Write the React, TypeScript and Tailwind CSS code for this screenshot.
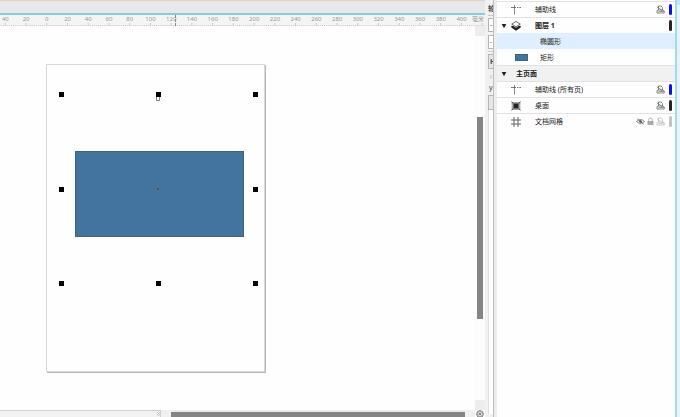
import type { ReactNode } from 'react';

const rulerLabels = [40, 20, 0, 20, 40, 60, 80, 100, 120, 140, 160, 180, 200, 220, 240, 260, 280, 300, 320, 340, 360, 380, 400];

const GuidesIcon = () => (
  <svg viewBox="0 0 10 10" className="w-[10px] h-[10px]" fill="none" stroke="#666">
    <path d="M3.5 0V9.5" strokeWidth="0.8" />
    <path d="M0 2.5H5M6 2.5H7.4M8.4 2.5H10" strokeWidth="0.9" />
  </svg>
);

const LayersIcon = () => (
  <svg viewBox="0 0 10 10" className="w-[10px] h-[10px]">
    <path d="M0.3 5L2 4.8L5 6.8L8 4.8L9.7 5V6.4L5 9.8L0.3 6.4Z" fill="#222" />
    <path d="M5 0.5L9.3 3.1L5 5.7L0.7 3.1Z" fill="#fff" stroke="#444" strokeWidth="0.8" />
  </svg>
);

const DesktopIcon = () => (
  <svg viewBox="0 0 10 10" className="w-[10px] h-[10px]">
    <rect x="1" y="1.2" width="8" height="7.6" fill="#bbb" stroke="#777" strokeWidth="0.5" />
    <rect x="2.5" y="2.5" width="5" height="5" fill="#222" />
    <path d="M0.5 0.8L2.5 2.7M9.5 0.8L7.5 2.7M0.5 9.2L2.5 7.3M9.5 9.2L7.5 7.3" stroke="#333" strokeWidth="0.8" />
  </svg>
);

const GridIcon = () => (
  <svg viewBox="0 0 10 10" className="w-[10px] h-[10px]" stroke="#555" strokeWidth="0.9">
    <path d="M3 0V10M7 0V10M0 3H10M0 7H10" />
  </svg>
);

const PrinterIcon = ({ color }: { color: string }) => (
  <svg viewBox="0 0 9 9" className="w-[9px] h-[9px]" fill="none" stroke={color} strokeWidth="0.8">
    <path d="M2.5 5V1H5L6.5 2.5V5" />
    <path d="M1 8V5.8L2.5 5H6.5L8.2 5.8V8Z" />
    <path d="M2.5 6.5H6.8M1 1.8L7.8 6.6" strokeWidth="0.7" />
  </svg>
);

const EyeOffIcon = () => (
  <svg viewBox="0 0 9 9" className="w-[9px] h-[9px]" fill="none" stroke="#555" strokeWidth="0.7">
    <path d="M0.5 4.5Q4.5 0.6 8.5 4.5Q4.5 8.4 0.5 4.5Z" />
    <circle cx="4.5" cy="4.5" r="1.1" fill="#555" />
    <path d="M1.2 1.7L7.8 7.4" />
  </svg>
);

const LockIcon = () => (
  <svg viewBox="0 0 9 9" className="w-[9px] h-[9px]">
    <path d="M2.7 4.2V2.8Q2.7 1 4.5 1Q6.3 1 6.3 2.8V4.2" fill="none" stroke="#aaa" strokeWidth="0.9" />
    <rect x="1.5" y="4" width="6" height="4" fill="#aaa" />
  </svg>
);

const Arrow = () => (
  <svg viewBox="0 0 6 6" className="w-[6px] h-[6px]">
    <path d="M0.6 1H5.4L3 5.2Z" fill="#222" />
  </svg>
);

const PrintButton = ({ color = '#666' }: { color?: string }) => (
  <button aria-label="打印" className="flex">
    <PrinterIcon color={color} />
  </button>
);

type RowProps = { icon: ReactNode; name: string; bold?: boolean; open?: boolean; children?: ReactNode };

const LayerRow = ({ icon, name, bold, open, children }: RowProps) => (
  <li className="flex h-4 items-center border-t border-[#e2e2e2] pr-[3px]">
    <div className="flex w-[14px] pl-1">
      {open && <button aria-label="折叠" className="flex"><Arrow /></button>}
    </div>
    <div className="w-6">{icon}</div>
    <span className={bold ? 'flex-1 font-bold' : 'flex-1'}>{name}</span>
    <div className="flex items-center">{children}</div>
  </li>
);

// selection handles around the ellipse
const handles = [
  'left-[59px] top-[66px]',
  'left-[156px] top-[66px]',
  'left-[253px] top-[66px]',
  'left-[59px] top-[161px]',
  'left-[253px] top-[161px]',
  'left-[59px] top-[255px]',
  'left-[156px] top-[255px]',
  'left-[253px] top-[255px]',
];

const Ruler = () => (
  <div className="relative flex h-[11px] bg-[#f4f4f4]">
    <div className="flex flex-1 -ml-[5px] text-[6px] leading-[8px] text-[#999]">
      {rulerLabels.map((n, i) => (
        <span key={i} className="flex-1 text-center">{n}</span>
      ))}
    </div>
    <span className="w-[13px] text-[6px] leading-[8px] text-[#999]">毫米</span>
    <svg className="absolute left-0 bottom-0 w-full h-[3px]" stroke="#aaa" strokeWidth="0.6">
      {Array.from({ length: 236 }, (_, i) => {
        const x = 5.3 + (i - 2) * 2.073;
        return <path key={i} d={`M${x} ${(i - 2) % 10 === 0 ? 0 : 2}V3`} />;
      })}
    </svg>
    <div className="absolute left-[175px] top-0 h-full border-l border-dashed border-[#888]" />
  </div>
);

const Canvas = () => (
  <div className="relative flex-1 overflow-hidden bg-[#fefefe]">
    <div className="absolute left-[46px] top-[38px] w-[219px] h-[308px] border border-[#d8d8d8] bg-[#fefefe] shadow-[1px_1px_0_#b8b8b8]" />
    <div className="absolute left-[75px] top-[125px] w-[169px] h-[86px] border border-[#3d6384] bg-[#43739f]" />
    {handles.map((pos) => (
      <div key={pos} className={`absolute w-[5px] h-[5px] bg-black ${pos}`} />
    ))}
    <div className="absolute left-[156px] top-[71px] w-1 h-1 border border-t-0 border-[#888]" />
    <div className="absolute left-[157px] top-[162px] w-[2px] h-[2px] bg-[#684b48]" />
  </div>
);

const Workspace = () => (
  <main className="flex min-w-0 flex-1 flex-col">
    <div className="h-[13px] border-t border-[#d4d4d4] bg-[#e8e8e8]" />
    <div className="h-[2px] bg-[#7fcdf2]" />
    <Ruler />
    <div className="flex flex-1">
      <Canvas />
      <div className="flex w-[10px] flex-col items-center bg-[#fcfcfc]">
        <button aria-label="向上滚动" className="h-[10px] w-full bg-[#ededed]" />
        <div className="flex-[81]" />
        <div className="w-[6px] flex-[202] bg-[#858585]" />
        <div className="flex-[81]" />
        <button aria-label="向下滚动" className="h-[10px] w-full bg-[#ededed]" />
      </div>
    </div>
    <div className="flex h-[7px] overflow-hidden">
      <div className="w-[161px] border-t border-r border-[#cfcfcf] bg-[#f2f2f2]">
        <svg viewBox="0 0 4 6" className="ml-auto w-1 h-[6px]" fill="#c4c4c4">
          <path d="M1 1h1v1h-1zM3 1h1v1h-1zM2 2h1v1h-1zM1 3h1v1h-1zM3 3h1v1h-1zM2 4h1v1h-1z" />
        </svg>
      </div>
      <button aria-label="向左滚动" className="w-[10px] bg-[#f0f0f0]" />
      <div className="flex-1 border-t-2 border-[#ececec] bg-[#858585]" />
      <button aria-label="向右滚动" className="w-[10px] bg-[#f0f0f0]" />
      <button aria-label="导航器" className="flex w-[10px] justify-center">
        <svg viewBox="0 0 8 8" className="w-2 h-2" fill="none" stroke="#555" strokeWidth="0.8">
          <circle cx="4" cy="4" r="3.3" />
          <path d="M4 0.8V7.2M0.8 4H7.2M1.8 1.8L6.2 6.2M6.2 1.8L1.8 6.2" strokeDasharray="1 0.7" />
        </svg>
      </button>
    </div>
  </main>
);

// docker hidden behind the object manager, only its left edge shows
const HiddenDocker = () => (
  <aside className="flex w-[9px] flex-col overflow-hidden border-r border-[#bdbdbd] bg-[#f1f1f1] pl-[3px] text-[7px] text-[#444]">
    <div className="h-4 w-5 border-b border-[#c8c8c8] pt-1 leading-[10px] font-bold">轮</div>
    <button className="mt-[2px] h-[14px] w-5 border border-[#b5b5b5] bg-white pl-px text-left leading-[12px]">-</button>
    <button className="mt-[3px] h-[14px] w-5 border border-[#b5b5b5] bg-white text-left leading-[12px] text-[#9a9ad0]">–</button>
    <div className="mt-[2px] h-px w-5 bg-[#d0d0d0]" />
    <button className="mt-[2px] h-[15px] w-5 border border-[#b5b5b5] bg-[#e6e6e6] pl-px text-left leading-[13px] font-bold">H</button>
    <span className="mt-[3px] pl-px leading-[10px] text-[#ccc]">x</span>
    <span className="pl-px leading-[12px]">y</span>
    <button aria-label="选项" className="mt-px h-[15px] w-5 border border-[#b5b5b5] bg-[#e6e6e6]" />
    <div className="mb-[3px] w-5 flex-1 bg-white border-l border-[#e0e0e0]" />
  </aside>
);

const ObjectDocker = () => (
  <section className="w-[181px] border-l-[3px] border-[#ededed] bg-[#fefefe] pt-px">
    <ul>
      <LayerRow icon={<GuidesIcon />} name="辅助线">
        <PrintButton />
        <span className="ml-1 h-[11px] w-[3px] rounded-full bg-[#0f0fe8]" />
      </LayerRow>
      <LayerRow icon={<LayersIcon />} name="图层 1" bold open>
        <span className="h-[11px] w-[3px] rounded-full bg-[#2b2422]" />
      </LayerRow>
      <li className="flex h-4 items-center border-t border-[#dfefff] bg-[#dfefff] pl-[43px]">椭圆形</li>
      <li className="flex h-4 items-center border-t border-[#fefefe] pl-[18px]">
        <span className="mr-3 h-[7px] w-[13px] border border-[#3d6384] bg-[#43739f]" />
        矩形
      </li>
      <li className="flex h-4 items-center border-t border-[#e2e2e2] bg-[#f1f1f1] pl-1 font-bold">
        <button aria-label="折叠" className="mr-[9px] flex"><Arrow /></button>
        主页面
      </li>
      <LayerRow icon={<GuidesIcon />} name="辅助线 (所有页)">
        <PrintButton />
        <span className="ml-1 h-[11px] w-[3px] rounded-full bg-[#0f0fe8]" />
      </LayerRow>
      <LayerRow icon={<DesktopIcon />} name="桌面">
        <PrintButton />
        <span className="ml-1 h-[11px] w-[3px] rounded-full bg-[#2b2422]" />
      </LayerRow>
      <LayerRow icon={<GridIcon />} name="文档网格">
        <button aria-label="显示" className="mr-px flex"><EyeOffIcon /></button>
        <button aria-label="锁定" className="mr-px flex"><LockIcon /></button>
        <PrintButton color="#bbb" />
        <span className="ml-1 h-[11px] w-[3px] rounded-full bg-[#c4c4c4]" />
      </LayerRow>
    </ul>
  </section>
);

const App = () => {
  return (
    <div className="flex h-screen overflow-hidden bg-[#fefefe] font-['Noto_Sans','Noto_Sans_CJK_SC',sans-serif] text-[7px] leading-[14px] text-[#222]">
      <Workspace />
      <HiddenDocker />
      <ObjectDocker />
      <div className="w-[5px] border-l-2 border-[#9bdcf5] bg-[#edf1f4]">
        <div className="h-[5px] bg-[#c5e6fa]" />
      </div>
    </div>
  );
};

export default App;
